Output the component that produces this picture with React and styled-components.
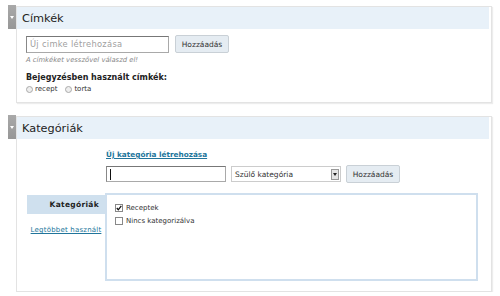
import styled, { createGlobalStyle } from "styled-components"

const Global = createGlobalStyle`
  body {
    margin: 0;
    background: #fff;
    font-family: "DejaVu Sans", Verdana, sans-serif;
    color: #333;
  }
`

const Page = styled.div`
  width: 500px;
  padding: 5px 8px 0 8px;
  box-sizing: border-box;
  display: flex;
  flex-direction: column;
  gap: 12px;
`

const Postbox = styled.div`
  display: flex;
  align-items: flex-start;
`

const Handle = styled.div`
  width: 8px;
  height: 24px;
  background: linear-gradient(#a9a9a9, #979797);
  display: flex;
  align-items: center;
  justify-content: center;
  &::after {
    content: "";
    border-left: 2.5px solid transparent;
    border-right: 2.5px solid transparent;
    border-top: 3px solid #fff;
  }
`

const Panel = styled.div`
  flex: 1;
  margin-top: 1px;
  border: 1px solid #e3e3e3;
  box-shadow: 1px 1px 1px rgba(0, 0, 0, 0.07);
  background: #fff;
`

const Header = styled.div`
  height: 22px;
  margin: 0 2px 0 0;
  background: #e8f1f9;
  display: flex;
  align-items: center;
  padding-left: 5px;
  font-size: 11.3px;
  color: #222;
`

const Content = styled.div`
  padding: ${p => p.$pad};
`

const Row = styled.div`
  display: flex;
  align-items: center;
  gap: ${p => p.$gap || 5}px;
`

const Input = styled.div`
  width: ${p => p.$w}px;
  height: ${p => p.$h}px;
  box-sizing: border-box;
  border: 1px solid #a9a9a9;
  border-top-color: #777;
  border-left-color: #888;
  font-size: 8.3px;
  letter-spacing: 0.3px;
  color: #a0a0a0;
  display: flex;
  align-items: center;
  padding-left: 3px;
  background: #fff;
`

const Caret = styled.span`
  width: 1px;
  height: 11px;
  background: #111;
`

const Button = styled.div`
  width: 54px;
  height: 18px;
  box-sizing: border-box;
  background: #e5ecf2;
  border: 1px solid #c9d0d6;
  border-radius: 2px;
  font-size: 7.5px;
  color: #333;
  display: flex;
  align-items: center;
  justify-content: center;
`

const Hint = styled.div`
  font-size: 6.8px;
  font-style: italic;
  color: #888;
  margin-top: 3px;
`

const Label = styled.div`
  font-size: 8px;
  font-weight: bold;
  color: #222;
  margin-top: 9px;
`

const Radio = styled.span`
  display: inline-flex;
  align-items: center;
  gap: 2px;
  font-size: 7px;
  color: #333;
  margin-right: 8px;
  &::before {
    content: "";
    width: 5px;
    height: 5px;
    border-radius: 50%;
    border: 1px solid #aaa;
    background: #eee;
  }
`

const Radios = styled.div`
  margin-top: 3px;
  display: flex;
`

const Form = styled.div`
  margin-left: 79px;
`

const BoldLink = styled.a`
  display: block;
  font-size: 7.3px;
  font-weight: bold;
  color: #21759b;
  text-decoration: underline;
  margin: 11px 0 6px 0;
`

const Select = styled.div`
  width: 110px;
  height: 16px;
  box-sizing: border-box;
  border: 1px solid #ccc;
  display: flex;
  align-items: center;
  justify-content: space-between;
  font-size: 7.5px;
  color: #333;
  padding: 0 1px 0 3px;
`

const Arrow = styled.span`
  width: 8px;
  height: 11px;
  background: #e6e6e6;
  border: 1px solid #999;
  box-sizing: border-box;
  display: flex;
  align-items: center;
  justify-content: center;
  &::after {
    content: "";
    border-left: 2px solid transparent;
    border-right: 2px solid transparent;
    border-top: 3px solid #222;
  }
`

const Tabs = styled.div`
  display: flex;
  margin-top: 10px;
`

const TabList = styled.div`
  width: 78px;
  margin-top: 2px;
  display: flex;
  flex-direction: column;
`

const Tab = styled.div`
  height: 19px;
  background: #cfe0ee;
  display: flex;
  align-items: center;
  justify-content: flex-end;
  padding-right: 6px;
  font-size: 7.5px;
  font-weight: bold;
  letter-spacing: 0.3px;
  color: #222;
`

const TabLink = styled.a`
  font-size: 7px;
  letter-spacing: 0.2px;
  color: #21759b;
  text-decoration: underline;
  text-align: center;
  margin-top: 12px;
`

const Box = styled.div`
  flex: 1;
  height: 88px;
  box-sizing: border-box;
  border: 2px solid #cfdfee;
  padding: 9px 8px;
  display: flex;
  flex-direction: column;
  gap: 5px;
`

const Check = styled.div`
  display: flex;
  align-items: center;
  gap: 3px;
  font-size: 7px;
  color: #333;
`

const CheckBox = styled.span`
  width: 8px;
  height: 8px;
  box-sizing: border-box;
  border: 1px solid #888;
  background: #fff;
  display: flex;
`

function App() {
  return (
    <>
      <Global />
      <Page>
        <Postbox>
          <Handle />
          <Panel>
            <Header>Címkék</Header>
            <Content $pad="6px 10px 9px 9px">
              <Row $gap={6}>
                <Input $w={143} $h={17}>Új cimke létrehozása</Input>
                <Button>Hozzáadás</Button>
              </Row>
              <Hint>A címkéket vesszővel válaszd el!</Hint>
              <Label>Bejegyzésben használt címkék:</Label>
              <Radios>
                <Radio>recept</Radio>
                <Radio>torta</Radio>
              </Radios>
            </Content>
          </Panel>
        </Postbox>
        <Postbox>
          <Handle />
          <Panel>
            <Header>Kategóriák</Header>
            <Content $pad="0 13px 10px 10px">
              <Form>
                <BoldLink href="#">Új kategória létrehozása</BoldLink>
                <Row $gap={5}>
                  <Input $w={120} $h={16}><Caret /></Input>
                  <Select>Szülő kategória<Arrow /></Select>
                  <Button>Hozzáadás</Button>
                </Row>
              </Form>
              <Tabs>
                <TabList>
                  <Tab>Kategóriák</Tab>
                  <TabLink href="#">Legtöbbet használt</TabLink>
                </TabList>
                <Box>
                  <Check>
                    <CheckBox>
                      <svg width="6" height="6" viewBox="0 0 6 6">
                        <path d="M0.8 3 L2.3 4.8 L5.3 0.8" fill="none" stroke="#111" strokeWidth="1.3" />
                      </svg>
                    </CheckBox>
                    Receptek
                  </Check>
                  <Check>
                    <CheckBox />
                    Nincs kategorizálva
                  </Check>
                </Box>
              </Tabs>
            </Content>
          </Panel>
        </Postbox>
      </Page>
    </>
  )
}

export default App
